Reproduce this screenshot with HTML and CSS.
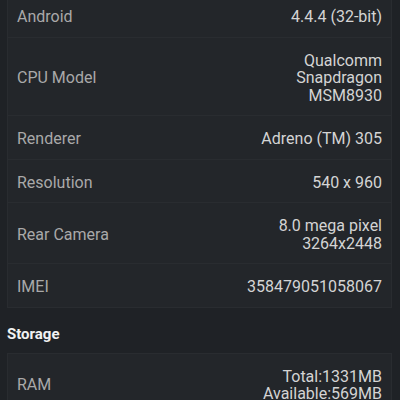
FILE: index.html
```html
<!DOCTYPE html>
<html>
<head>
<meta charset="utf-8">
<link rel="stylesheet" href="styles.css">
</head>
<body>
<div class="page">
  <div class="card first">
    <div class="row"><div class="label">Android</div><div class="value">4.4.4 (32-bit)</div></div>
    <div class="row"><div class="label">CPU Model</div><div class="value">Qualcomm<br>Snapdragon<br>MSM8930</div></div>
    <div class="row"><div class="label">Renderer</div><div class="value">Adreno (TM) 305</div></div>
    <div class="row"><div class="label">Resolution</div><div class="value">540 x 960</div></div>
    <div class="row"><div class="label">Rear Camera</div><div class="value">8.0 mega pixel<br>3264x2448</div></div>
    <div class="row"><div class="label">IMEI</div><div class="value">358479051058067</div></div>
  </div>
  <div class="section">Storage</div>
  <div class="card">
    <div class="row"><div class="label">RAM</div><div class="value">Total:1331MB<br>Available:569MB</div></div>
  </div>
</div>
</body>
</html>
```

FILE: styles.css
```css
html, body {
  margin: 0;
  padding: 0;
  background: #1f2226;
  overflow: hidden;
  height: 400px;
}
.page {
  display: flex;
  flex-direction: column;
  padding: 0 8px 0 7px;
  font-family: Roboto, "Noto Sans", sans-serif;
  font-size: 16px;
  line-height: 17.5px;
}
.card {
  background: #23262a;
  border-left: 1px solid #292c30;
  border-right: 1px solid #292c30;
  border-top: 1px solid #292c30;
  display: flex;
  flex-direction: column;
}
.card.first {
  margin-top: -6px;
  border-top: none;
}
.row {
  display: flex;
  justify-content: space-between;
  align-items: center;
  padding: 14px 9px 11px 9px;
  border-bottom: 1px solid #292c30;
}
.label {
  color: #a9a9a9;
}
.value {
  color: #d4d4d4;
  text-align: right;
}
.section {
  color: #f2f2f2;
  font-weight: bold;
  font-size: 15px;
  line-height: 18px;
  margin: 17px 0 10px 0;
}
```
